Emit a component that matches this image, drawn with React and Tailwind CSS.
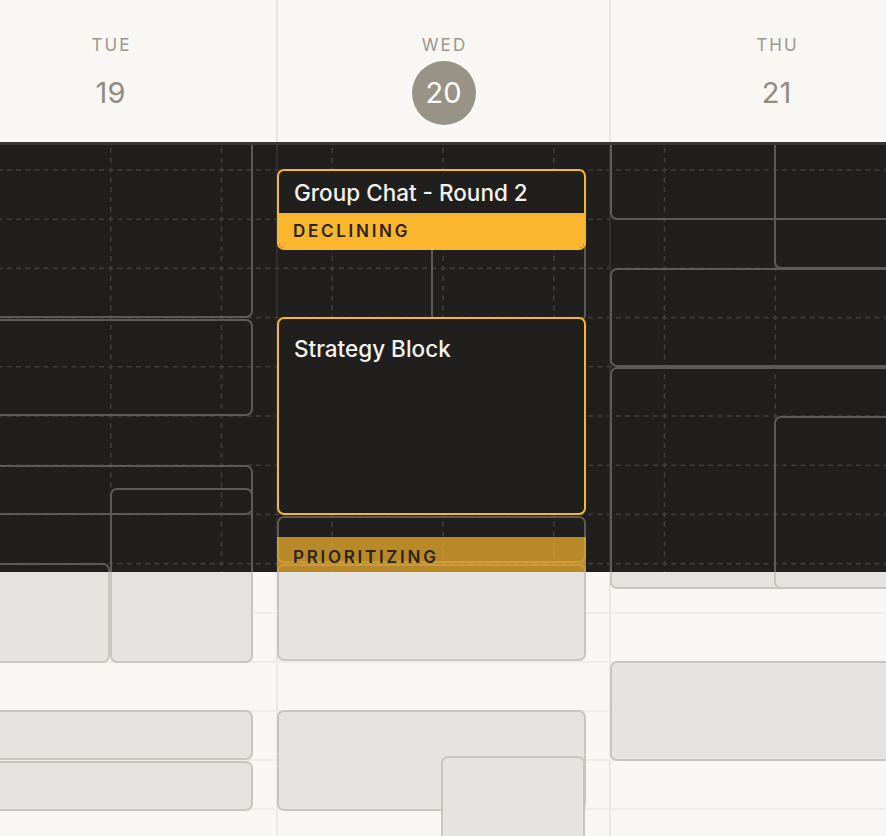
import React from "react";

const BODY_TOP = 142;
const LENS_H = 430;

// page coordinates: [x1, y1, x2, y2]
const EVENTS = [
  // TUE
  [-60, 90, 253, 318],
  [-60, 319, 253, 416],
  [-60, 465, 253, 515],
  [-60, 563, 110, 663],
  [110, 488, 253, 663],
  [-60, 710, 253, 760],
  [-60, 761, 253, 811],
  // WED
  [431, 180, 586, 322],
  [277, 516, 586, 563],
  [277, 564, 586, 661],
  [277, 710, 586, 811],
  [441, 756, 585, 900],
  // THU
  [610, 90, 920, 220],
  [774, 90, 920, 269],
  [610, 268, 920, 367],
  [610, 367, 920, 589],
  [774, 416, 920, 589],
  [610, 661, 920, 761],
];

const DAYS = [
  { name: "TUE", num: "19" },
  { name: "WED", num: "20", today: true },
  { name: "THU", num: "21" },
];

function box([x1, y1, x2, y2]) {
  return { left: x1, top: y1 - BODY_TOP, width: x2 - x1, height: y2 - y1 };
}

function DayHead({ name, num, today }) {
  return (
    <div className="flex w-[333px] shrink-0 flex-col items-center border-r-2 border-[#e8e6e2] pt-[35px]">
      <div className="pl-[0.12em] text-[17px] leading-[20px] tracking-[0.12em] text-[#9b9890]">
        {name}
      </div>
      <div
        className={
          today
            ? "mt-[6px] flex h-[64px] w-[64px] items-center justify-center rounded-full bg-[#979387] text-[29px] text-white"
            : "mt-[6px] flex h-[64px] w-[64px] items-center justify-center rounded-full text-[29px] text-[#8f8c84]"
        }
      >
        {num}
      </div>
    </div>
  );
}

function DarkGrid() {
  const hs = [];
  for (let k = 0; k < 9; k++) hs.push(28 + 49.2 * k);
  const vs = [];
  for (let k = 1; k < 8; k++) vs.push(110.75 * k);
  return (
    <svg className="absolute inset-0" width="886" height={LENS_H}>
      {hs.map((y) => (
        <line
          key={"h" + y}
          x1="0"
          x2="886"
          y1={y}
          y2={y}
          stroke="#403e3a"
          strokeWidth="1.6"
          strokeDasharray="5 4.23"
          strokeDashoffset="2.5"
        />
      ))}
      {vs.map((x) => (
        <line
          key={"v" + x}
          x1={x}
          x2={x}
          y1="0"
          y2={LENS_H}
          stroke="#403e3a"
          strokeWidth="1.6"
          strokeDasharray="5 4.84"
          strokeDashoffset="4.02"
        />
      ))}
      {[277, 610].map((x) => (
        <line key={"c" + x} x1={x} x2={x} y1="0" y2={LENS_H} stroke="#363532" strokeWidth="1.5" />
      ))}
    </svg>
  );
}

export default function App() {
  return (
    <div className="relative h-[836px] w-[886px] overflow-hidden bg-[#f8f7f3] font-['Inter',sans-serif]">
      <header className="-ml-[55px] flex h-[142px]">
        {DAYS.map((d) => (
          <DayHead key={d.name} {...d} />
        ))}
      </header>

      <div className="relative h-[694px] overflow-hidden">
        {/* day columns */}
        <div className="-ml-[55px] flex h-full">
          {DAYS.map((d) => (
            <div key={d.name} className="h-full w-[333px] shrink-0 border-r-2 border-[#ebe9e5]" />
          ))}
        </div>

        {/* hour rows */}
        <div className="pointer-events-none absolute inset-0 flex flex-col pt-[27px]">
          {Array.from({ length: 14 }).map((_, i) => (
            <div key={i} className="h-[49.2px] shrink-0 border-t-2 border-[#eeede9]" />
          ))}
        </div>

        {/* events (light) */}
        <div className="absolute inset-0">
          {EVENTS.map((e, i) => (
            <div
              key={i}
              className="absolute rounded-[7px] border-2 border-[#c7c6c0] bg-[#e4e3df]"
              style={box(e)}
            />
          ))}
        </div>

        {/* dark focus band */}
        <div className="absolute left-0 top-0 h-[430px] w-full overflow-hidden bg-[#201f1d]">
          <DarkGrid />
          {EVENTS.map((e, i) => (
            <div
              key={i}
              className="absolute rounded-[7px] border-2 border-[#5d5b56]"
              style={box(e)}
            />
          ))}

          <div className="absolute left-[277px] top-[27px] flex h-[81px] w-[309px] flex-col overflow-hidden rounded-[7px] border-2 border-[#fbb62f] bg-[#201f1d]">
            <div className="h-[42px] shrink-0 px-[15px] pt-[8px] text-[22.5px] font-medium leading-[28px] text-[#f4f3ef]">
              Group Chat - Round 2
            </div>
            <div className="flex-1 bg-[#fbb62f] px-[14px] pt-[8px] text-[17px] font-semibold leading-[20px] tracking-[0.16em] text-[#2a2315]">
              DECLINING
            </div>
          </div>

          <div className="absolute left-[277px] top-[175px] h-[198px] w-[309px] rounded-[7px] border-2 border-[#fbb62f] bg-[#201f1d] px-[15px] pt-[16px] text-[22.5px] font-medium leading-[28px] text-[#f4f3ef]">
            Strategy Block
          </div>

          <div className="absolute left-[277px] top-[395px] h-[40px] w-[309px] bg-[#fbb62f]/70 px-[16px] pt-[10px] text-[17px] font-semibold leading-[20px] tracking-[0.16em] text-[#2a2418]">
            PRIORITIZING
          </div>

          <div className="absolute left-0 top-0 h-[3px] w-full bg-[#393835]" />
        </div>
      </div>
    </div>
  );
}
